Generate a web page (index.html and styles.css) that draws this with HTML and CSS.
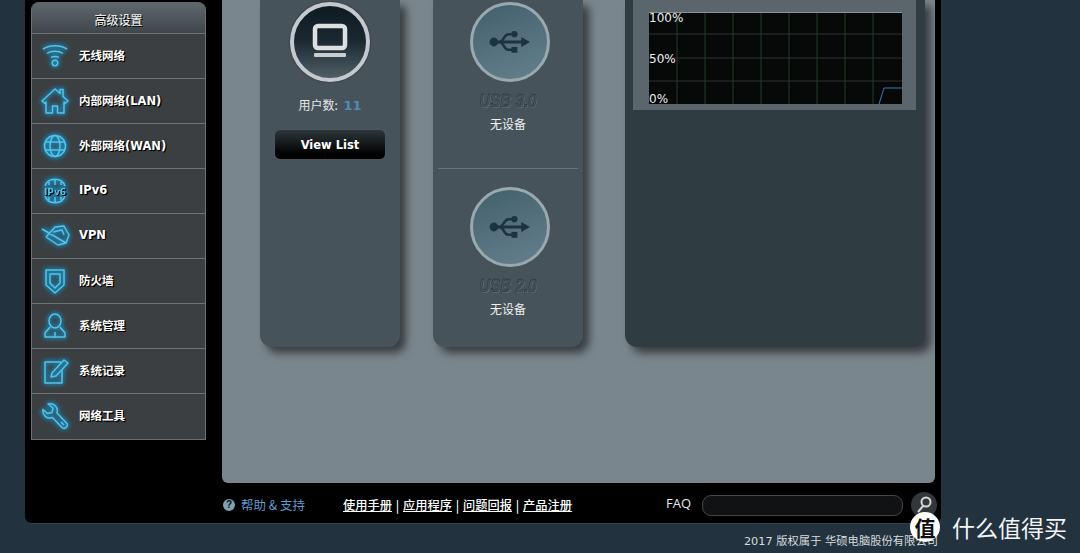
FILE: index.html
```html
<!DOCTYPE html>
<html>
<head>
    <title>Router Status</title>
    <link rel="stylesheet" href="styles.css">
</head>
<body>
    <div class="frame">
        <div class="top">
            <div class="menu">
                <div class="menu-head">高级设置</div>
                <div class="menu-item">
                    <svg class="micon" viewBox="0 0 30 30"><path d="M3 8C10 3.500 20 3.500 27 8M7 12.500C11 9.500 19 9.500 23 12.500M11 16.500C13 15 17 15 19 16.500"/><circle cx="15" cy="22" r="2.800"/></svg>
                    <span>无线网络</span>
                </div>
                <div class="menu-item">
                    <svg class="micon" viewBox="0 0 30 30"><path d="M2 15L15 3L20 7.500V3.500H23V10.500L28 15L25 17.500L24 16V27H17.500V20H12.500V27H6V16L5 17.500Z"/></svg>
                    <span>内部网络(LAN)</span>
                </div>
                <div class="menu-item">
                    <svg class="micon" viewBox="0 0 30 30"><circle cx="15" cy="15" r="10.500"/><ellipse cx="15" cy="15" rx="5" ry="10.500"/><path d="M5 11H25M5 19H25"/></svg>
                    <span>外部网络(WAN)</span>
                </div>
                <div class="menu-item">
                    <svg class="micon" viewBox="0 0 30 30"><path d="M5 10C8 1 22 1 25 10M5 20C8 29 22 29 25 20M15 4V9M15 21V26M9 6V9M21 6V9M9 21V24M21 21V24"/><text x="15" y="18.500" class="micon-text">IPv6</text></svg>
                    <span>IPv6</span>
                </div>
                <div class="menu-item">
                    <svg class="micon" viewBox="0 0 30 30"><path d="M2 8L26 22M6 16L15 6L24 5L29 14L26 22L18 24L6 16M13 11L22 9L24 14"/></svg>
                    <span>VPN</span>
                </div>
                <div class="menu-item">
                    <svg class="micon" viewBox="0 0 30 30"><path d="M6 4H24V19L15 27L6 19Z"/><path d="M10 8H20V17L15 22L10 17Z"/></svg>
                    <span>防火墙</span>
                </div>
                <div class="menu-item">
                    <svg class="micon" viewBox="0 0 30 30"><ellipse cx="15" cy="10" rx="6" ry="7"/><path d="M10 16C8 19 6 20 5 22V26H25V22C24 20 22 19 20 16M15 26V21"/></svg>
                    <span>系统管理</span>
                </div>
                <div class="menu-item">
                    <svg class="micon" viewBox="0 0 30 30"><path d="M21 6H5V27H22V14"/><path d="M11 21L12 17L24 4L28 7L16 20Z"/></svg>
                    <span>系统记录</span>
                </div>
                <div class="menu-item">
                    <svg class="micon" viewBox="0 0 30 30"><path d="M8 3L13 7L12 11.500L7.500 12.500L3 8.500C2 14 7 18.500 12.500 16.500L22 26.500C25 29 29 25 26.500 22L17 12C18.500 6 14 1.500 8 3Z"/><path d="M21 21L24 24"/></svg>
                    <span>网络工具</span>
                </div>
            </div>

            <div class="main">
                <div class="panel clients">
                    <div class="ring ring-dark">
                        <svg class="ring-icon" viewBox="0 0 40 40"><rect x="5" y="4" width="30" height="22" rx="3" class="pc-screen"/><rect x="4" y="31" width="32" height="4" rx="1" class="pc-base"/></svg>
                    </div>
                    <div class="count">用户数: <b>11</b></div>
                    <div class="view-btn">View List</div>
                </div>

                <div class="panel usb">
                    <div class="usb-slot">
                        <div class="ring ring-usb">
                            <svg class="usb-icon" viewBox="0 0 44 24"><circle cx="5" cy="12" r="4.500"/><path d="M5 10.500H33V7L42 12L33 17V13.500H5Z"/><path d="M11 12C15 12 15 4 20 4H24" class="usb-line"/><circle cx="26" cy="4" r="3.200"/><path d="M11 12C15 12 15 20 20 20H24" class="usb-line"/><rect x="23" y="17" width="6" height="6"/></svg>
                        </div>
                        <div class="usb-name">USB 3.0</div>
                        <div class="usb-state">无设备</div>
                    </div>
                    <div class="usb-slot usb-second">
                        <div class="ring ring-usb">
                            <svg class="usb-icon" viewBox="0 0 44 24"><circle cx="5" cy="12" r="4.500"/><path d="M5 10.500H33V7L42 12L33 17V13.500H5Z"/><path d="M11 12C15 12 15 4 20 4H24" class="usb-line"/><circle cx="26" cy="4" r="3.200"/><path d="M11 12C15 12 15 20 20 20H24" class="usb-line"/><rect x="23" y="17" width="6" height="6"/></svg>
                        </div>
                        <div class="usb-name">USB 2.0</div>
                        <div class="usb-state">无设备</div>
                    </div>
                </div>

                <div class="panel traffic">
                    <div class="chart-box">
                        <svg class="chart" viewBox="0 0 253 92">
                            <rect width="253" height="92" fill="#070908"/>
                            <path class="grid-v" d="M28 0V92M56 0V92M84 0V92M112 0V92M140 0V92M168 0V92M196 0V92M224 0V92"/>
                            <path class="grid-h" d="M0 22H253M0 46H253M0 69H253"/>
                            <path class="grid-top" d="M0 .5H253"/>
                            <path class="line" d="M230 92L235 76H253"/>
                            <text x="0" y="10" class="chart-text">100%</text>
                            <text x="0" y="51" class="chart-text">50%</text>
                            <text x="0" y="91" class="chart-text">0%</text>
                        </svg>
                    </div>
                </div>
            </div>
        </div>

        <div class="footer">
            <div class="help"><span class="help-mark">?</span>帮助 &amp; 支持</div>
            <div class="links"><a>使用手册</a> | <a>应用程序</a> | <a>问题回报</a> | <a>产品注册</a></div>
            <div class="faq">FAQ</div>
            <div class="faq-input"></div>
            <div class="search">
                <svg viewBox="0 0 26 26"><circle cx="15" cy="10" r="4.500"/><path d="M12 14L7 20"/></svg>
            </div>
        </div>
    </div>
    <div class="copyright">2017 版权属于 华硕电脑股份有限公司</div>

    <div class="watermark">
        <span class="wm-logo">值</span>
        <span class="wm-text">什么值得买</span>
    </div>
</body>
</html>
```

FILE: styles.css
```css
html, body {
    margin: 0;
    padding: 0;
    height: 553px;
    overflow: hidden;
}
body {
    position: relative;
    background: #22323e;
    font-family: "Liberation Sans", "Noto Sans CJK SC", sans-serif;
    color: #fff;
}
.frame {
    width: 916px;
    height: 523px;
    margin-left: 25px;
    background: #000;
    border-radius: 0 0 6px 6px;
    box-shadow: 0 1px 0 #33424c;
}
.top {
    display: flex;
    height: 483px;
}

/* left menu */
.menu {
    width: 175px;
    height: 438px;
    margin: 2px 0 0 6px;
    border: 1px solid #6a7074;
    border-top: 0;
    box-sizing: border-box;
    border-radius: 8px 8px 0 0;
    background: #3b3f42;
}
.menu-head {
    height: 31px;
    line-height: 35px;
    text-align: center;
    font-family: "Noto Sans CJK SC", sans-serif;
    font-size: 12px;
    font-weight: 500;
    color: #e6e8e8;
    background: linear-gradient(#5f686d, #3f474b);
    border-radius: 8px 8px 0 0;
    text-shadow: 1px 1px 0 #000;
}
.menu-item {
    display: flex;
    align-items: center;
    height: 44px;
    padding-bottom: 1px;
    margin-bottom: -1px;
    border-top: 1px solid #6d7275;
    font-family: "DejaVu Sans", "Noto Sans CJK SC", sans-serif;
    font-size: 11.500px;
    font-weight: bold;
    text-shadow: 1px 1px 1px #000, 1px 1px 0 #000;
}
.menu-item span {
    margin-top: -3px;
}
.micon {
    width: 30px;
    height: 30px;
    margin: 0 9px 0 8px;
    fill: none;
    stroke: #55c4e8;
    stroke-width: 1.500;
    stroke-linejoin: round;
    filter: drop-shadow(0 0 2px #1b88b8) drop-shadow(0 0 2px #1b88b8);
    flex-shrink: 0;
}
.micon-text {
    font-family: "DejaVu Sans", sans-serif;
    font-size: 9px;
    font-weight: bold;
    text-anchor: middle;
    fill: #55c4e8;
    stroke: none;
}

/* main area */
.main {
    display: flex;
    align-items: flex-start;
    width: 713px;
    height: 483px;
    margin-left: 16px;
    padding-left: 38px;
    box-sizing: border-box;
    background: #7a868d;
    border-radius: 0 0 6px 6px;
}
.panel {
    height: 347px;
    box-sizing: border-box;
    border-radius: 0 0 12px 12px;
    background: #47535a;
    box-shadow: 6px 6px 9px rgba(0, 0, 0, 0.55);
}
.clients {
    width: 140px;
    display: flex;
    flex-direction: column;
    align-items: center;
    padding-top: 2px;
}
.usb {
    width: 150px;
    margin-left: 33px;
    padding-top: 2px;
}
.traffic {
    width: 300px;
    margin-left: 42px;
    padding: 0 9px 0 8px;
    background: #2f3c42;
}
.ring {
    width: 80px;
    height: 80px;
    box-sizing: border-box;
    border-radius: 50%;
    display: flex;
    align-items: center;
    justify-content: center;
}
.ring-dark {
    border: 4px solid #c3c9cc;
    background: linear-gradient(#0f1a22 0%, #1a2832 48%, #505e66 100%);
    box-shadow: 0 0 2px #1d2428;
}
.ring-icon {
    width: 40px;
    height: 40px;
}
.pc-screen {
    fill: none;
    stroke: #dde0e0;
    stroke-width: 4.500;
}
.pc-base {
    fill: #c8cdce;
}
.count {
    margin-top: 14px;
    height: 18px;
    line-height: 18px;
    font-family: "Noto Sans CJK SC", sans-serif;
    font-size: 12px;
    color: #e4e8ea;
}
.count b {
    margin-left: 3px;
    font-family: "DejaVu Sans", sans-serif;
    font-size: 13px;
    color: #4f8cb8;
}
.view-btn {
    width: 110px;
    height: 29px;
    margin-top: 16px;
    line-height: 30px;
    text-align: center;
    border-radius: 5px;
    background: linear-gradient(#2d363b, #000 85%);
    box-shadow: 0 0 1px #68757c;
    font-family: "DejaVu Sans", sans-serif;
    font-size: 11.500px;
    font-weight: bold;
}
.usb-slot {
    display: flex;
    flex-direction: column;
    align-items: center;
    height: 166px;
}
.usb-second {
    margin: 0 5px;
    padding-top: 18px;
    border-top: 1px solid #65737a;
}
.ring-usb {
    border: 3.500px solid #9aa8af;
    background: linear-gradient(160deg, #42606c, #64808c);
    margin-left: 4px;
}
.usb-icon {
    width: 43px;
    height: 24px;
    fill: #1b3440;
}
.usb-line {
    fill: none;
    stroke: #1b3440;
    stroke-width: 2.600;
}
.usb-name {
    margin-top: 9px;
    height: 20px;
    line-height: 20px;
    font-family: "Liberation Sans", sans-serif;
    font-size: 19px;
    font-weight: bold;
    font-style: italic;
    color: #46535b;
    -webkit-text-stroke: .4px #1f2a30;
    text-shadow: 1px 1px 0 #66737a;
    transform: scaleX(.8);
    white-space: nowrap;
}
.usb-state {
    margin-top: 5px;
    font-family: "Noto Sans CJK SC", sans-serif;
    font-size: 12px;
    line-height: 16px;
    color: #eef1f2;
}
.chart-box {
    width: 283px;
    height: 110px;
    padding: 12px 14px 6px 16px;
    box-sizing: border-box;
    background: #5a666c;
}
.chart {
    display: block;
    width: 253px;
    height: 92px;
    overflow: visible;
}
.grid-v {
    stroke: #223f24;
    stroke-width: 1;
}
.grid-h {
    stroke: #2e332f;
    stroke-width: 1;
}
.grid-top {
    stroke: #8b9498;
    stroke-width: 1;
}
.line {
    fill: none;
    stroke: #3f78b4;
    stroke-width: 1;
}
.chart-text {
    font-family: "DejaVu Sans", sans-serif;
    font-size: 12px;
    fill: #eee;
}

/* footer */
.footer {
    display: flex;
    align-items: center;
    height: 40px;
    padding-top: 3px;
    box-sizing: border-box;
    font-size: 12px;
}
.help {
    display: flex;
    align-items: center;
    margin-left: 198px;
    width: 120px;
    font-family: "Noto Sans CJK SC", sans-serif;
    color: #5f9ad0;
    font-size: 12.500px;
}
.help-mark {
    width: 12px;
    height: 12px;
    margin-right: 6px;
    border-radius: 50%;
    background: #7fa0ad;
    color: #0a1418;
    font-family: "Liberation Sans", sans-serif;
    font-size: 10px;
    font-weight: bold;
    line-height: 12px;
    text-align: center;
}
.links {
    width: 323px;
    font-family: "Noto Sans CJK SC", sans-serif;
    font-size: 12.250px;
    font-weight: 500;
    word-spacing: 1px;
    white-space: nowrap;
}
.links a {
    text-decoration: underline;
}
.faq {
    width: 36px;
    margin-bottom: 3px;
    font-family: "Open Sans", sans-serif;
    font-size: 13px;
    color: #e4e8ea;
}
.faq-input {
    width: 201px;
    height: 21px;
    margin-top: 1px;
    box-sizing: border-box;
    border: 1px solid #44464a;
    border-radius: 9px;
    background: #111214;
}
.search {
    width: 26px;
    height: 26px;
    margin-left: 8px;
    border-radius: 50%;
    background: #33363a;
}
.search svg {
    display: block;
    width: 26px;
    height: 26px;
    fill: none;
    stroke: #d5d8d8;
    stroke-width: 2;
}
.copyright {
    margin: 11px 142px 0 0;
    text-align: right;
    font-family: "DejaVu Sans", "Noto Sans CJK SC", sans-serif;
    font-size: 11.300px;
    line-height: 16px;
    color: #d8dcde;
    white-space: nowrap;
}

/* site watermark over the picture */
.watermark {
    position: absolute;
    left: 910px;
    top: 512px;
    display: flex;
    align-items: center;
    gap: 12px;
}
.wm-logo {
    width: 30px;
    height: 30px;
    border-radius: 50%;
    background: #fff;
    color: #111;
    font-family: "Noto Sans CJK SC", sans-serif;
    font-size: 21px;
    font-weight: bold;
    line-height: 30px;
    text-align: center;
}
.wm-text {
    font-family: "Noto Sans CJK SC", sans-serif;
    font-size: 23px;
    line-height: 30px;
    color: #f2f4f5;
    white-space: nowrap;
}
```
